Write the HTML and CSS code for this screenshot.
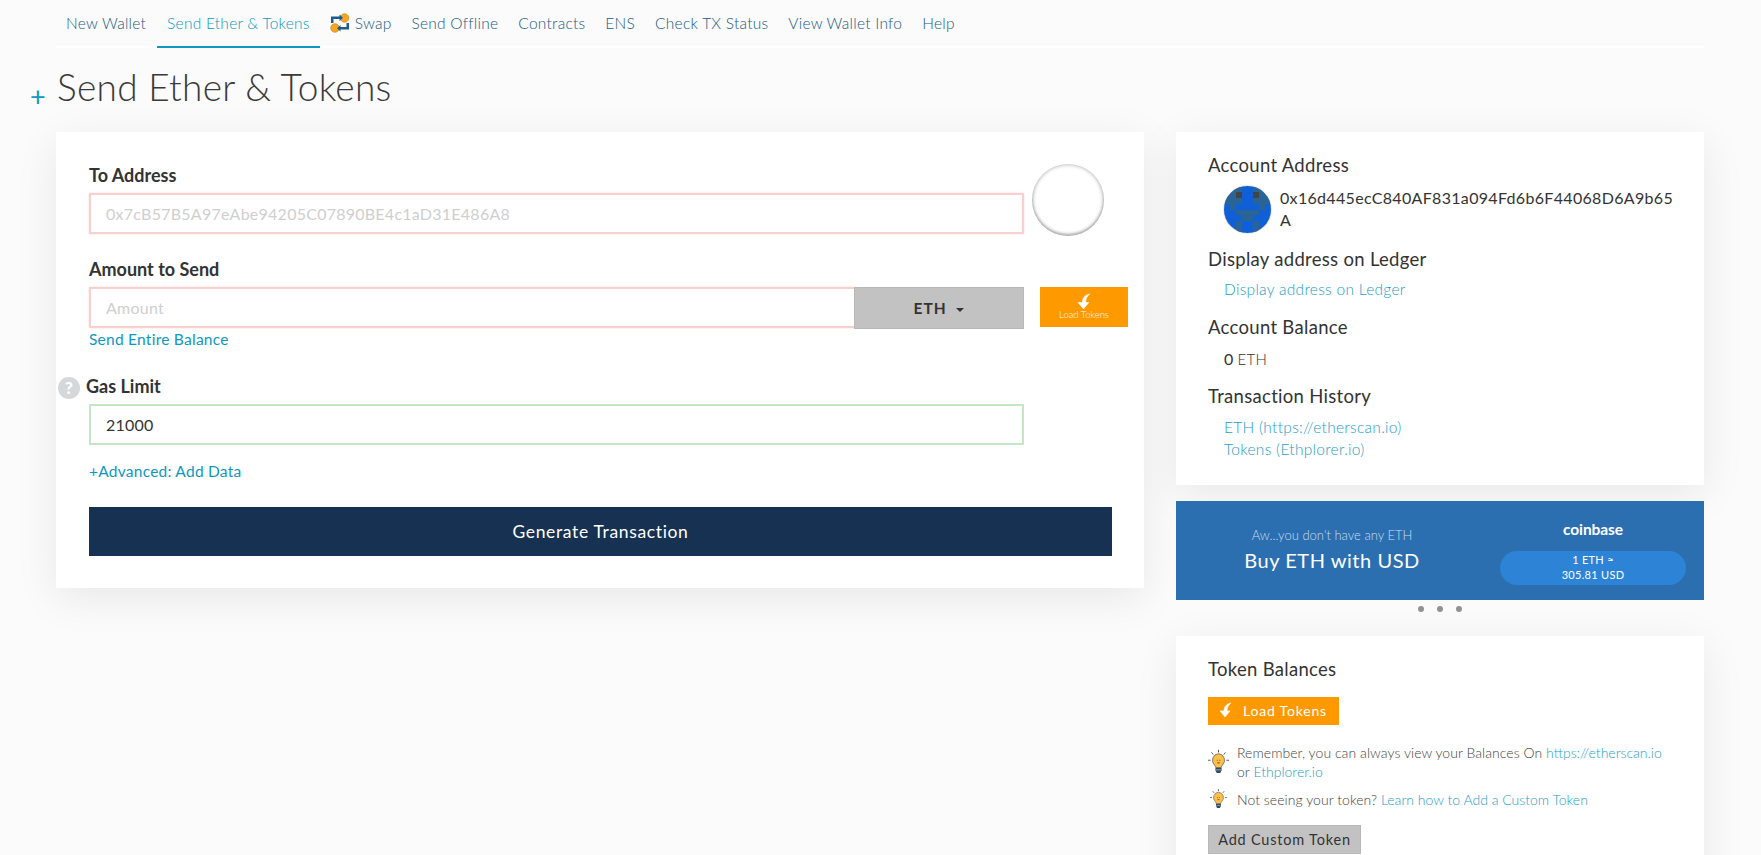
FILE: index.html
```html
<!DOCTYPE html>
<html lang="en">
<head>
<meta charset="utf-8">
<title>Send Ether &amp; Tokens</title>
<link rel="stylesheet" href="styles.css">
</head>
<body>
<svg class="defs" width="0" height="0" aria-hidden="true">
  <defs>
    <symbol id="arrow" viewBox="0 0 16 16">
      <path d="M13 1C8 2 6 5 6 9H2l5 6 5-6H9c0-3 1-6 4-8z" fill="currentColor" stroke="currentColor" stroke-width=".6" stroke-linejoin="round"/>
    </symbol>
    <symbol id="bulb" viewBox="0 0 24 28">
      <g stroke="#444" stroke-width="1" fill="none">
        <path d="M12 0v3M4 3l2 2.500M20 3l-2 2.500M0 12h3M21 12h3"/>
      </g>
      <path d="M12 4.500a7.500 7.500 0 0 0-4.500 13c1 1 1 2 1.500 3h6c.5-1 .5-2 1.500-3A7.500 7.500 0 0 0 12 4.500z" fill="#fbc04d" stroke="#555" stroke-width=".8"/>
      <path d="M10 12h1M13 12h1M10.500 15h3" stroke="#5a4520" stroke-width="1"/>
      <path d="M8.500 20.500h7v3l-1.500 3h-4l-1.500-3z" fill="#34495e"/>
      <path d="M9 23h6" stroke="#9fb6c8" stroke-width="1"/>
    </symbol>
  </defs>
</svg>

<nav class="nav">
  <a class="nav-item nav-first" href="#">New Wallet</a>
  <a class="nav-item is-active" href="#">Send Ether &amp; Tokens</a>
  <a class="nav-item" href="#">
    <svg class="swap-icon" viewBox="0 0 20 20" width="20" height="20" aria-hidden="true">
      <circle cx="14.500" cy="5" r="4.300" fill="#f6a623" stroke="#c97f10" stroke-width=".6"/>
      <circle cx="5" cy="15" r="4.300" fill="#f6a623" stroke="#c97f10" stroke-width=".6"/>
      <path d="M1 3.500h8.500V1.500l3.500 3.200-3.500 3.200V6H3.500v4H1z" fill="#1d5c8f"/>
      <path d="M19 16.500h-8.500v2l-3.500-3.200 3.500-3.200V14h6v-4H19z" fill="#1d5c8f"/>
    </svg>
    Swap</a>
  <a class="nav-item" href="#">Send Offline</a>
  <a class="nav-item" href="#">Contracts</a>
  <a class="nav-item" href="#">ENS</a>
  <a class="nav-item" href="#">Check TX Status</a>
  <a class="nav-item" href="#">View Wallet Info</a>
  <a class="nav-item" href="#">Help</a>
</nav>

<header class="title-row">
  <span class="plus">+</span>
  <h1 class="title">Send Ether &amp; Tokens</h1>
</header>

<main class="columns">
  <section class="card main-card">
    <div class="field-row address-row">
      <div class="field">
        <label class="field-label">To Address</label>
        <input class="text-input is-invalid" type="text" placeholder="0x7cB57B5A97eAbe94205C07890BE4c1aD31E486A8">
      </div>
      <div class="empty-identicon"></div>
    </div>

    <div class="field-row amount-row">
      <div class="field">
        <label class="field-label">Amount to Send</label>
        <div class="input-group">
          <input class="text-input is-invalid group-input" type="text" placeholder="Amount">
          <button class="eth-button" type="button">ETH <span class="caret"></span></button>
        </div>
        <a class="link send-all" href="#">Send Entire Balance</a>
      </div>
      <button class="load-small" type="button">
        <svg class="load-small-icon" aria-hidden="true"><use href="#arrow"/></svg>
        <span>Load Tokens</span>
      </button>
    </div>

    <div class="gas-label-row">
      <span class="help-badge">?</span>
      <label class="field-label gas-label">Gas Limit</label>
    </div>
    <input class="text-input is-valid gas-input" type="text" value="21000">
    <a class="link advanced" href="#">+Advanced: Add Data</a>

    <button class="generate" type="button">Generate Transaction</button>
  </section>

  <aside class="side">
    <section class="card side-card account-card">
      <h5 class="side-heading">Account Address</h5>
      <div class="address-line">
        <svg class="identicon" viewBox="0 0 8 8" shape-rendering="crispEdges" aria-hidden="true">
          <rect width="8" height="8" fill="#0f5fd6"/>
          <path d="M0 0h3v1H0zM5 0h3v1H5zM0 1h3v1H0zM5 1h3v1H5zM0 2h3v1H0zM5 2h3v1H5zM1 3h1v1H1zM6 3h1v1H6zM2 4h1v1H2zM5 4h1v1H5zM3 4h2v2H3zM2 6h1v2H2zM5 6h1v2H5z" fill="#2a6496"/>
          <path d="M2 1h1v1H2zM5 1h1v1H5z" fill="#444"/>
        </svg>
        <span class="address-text">0x16d445ecC840AF831a094Fd6b6F44068D6A9b65A</span>
      </div>
      <h5 class="side-heading">Display address on Ledger</h5>
      <p class="side-links"><a class="side-link" href="#">Display address on Ledger</a></p>
      <h5 class="side-heading">Account Balance</h5>
      <p class="balance"><strong class="balance-num">0</strong> <span class="balance-unit">ETH</span></p>
      <h5 class="side-heading">Transaction History</h5>
      <p class="side-links history">
        <a class="side-link" href="#">ETH (https://etherscan.io)</a>
        <a class="side-link" href="#">Tokens (Ethplorer.io)</a>
      </p>
    </section>

    <section class="banner">
      <div class="banner-left">
        <p class="banner-sub">Aw...you don't have any ETH</p>
        <p class="banner-main">Buy ETH with USD</p>
      </div>
      <div class="banner-right">
        <p class="coinbase">coinbase</p>
        <p class="rate">1 ETH ≈<br>305.81 USD</p>
      </div>
    </section>
    <div class="dots"><i class="dot"></i><i class="dot"></i><i class="dot"></i></div>

    <section class="card side-card token-card">
      <h5 class="side-heading token-heading">Token Balances</h5>
      <button class="load-big" type="button">
        <svg class="load-big-icon" aria-hidden="true"><use href="#arrow"/></svg>
        Load Tokens
      </button>
      <div class="tip tip-large">
        <svg class="bulb" aria-hidden="true"><use href="#bulb"/></svg>
        <p class="tip-text">Remember, you can always view your Balances On <a class="side-link" href="#">https://etherscan.io</a> or <a class="side-link" href="#">Ethplorer.io</a></p>
      </div>
      <div class="tip tip-small">
        <svg class="bulb small" aria-hidden="true"><use href="#bulb"/></svg>
        <p class="tip-text">Not seeing your token? <a class="side-link" href="#">Learn how to Add a Custom Token</a></p>
      </div>
      <button class="add-token" type="button">Add Custom Token</button>
    </section>
  </aside>
</main>
</body>
</html>
```

FILE: styles.css
```css
* { box-sizing: border-box; }
html, body { margin: 0; height: 855px; overflow: hidden; }
body {
  background: #fbfbfb;
  font-family: Lato, "Open Sans", sans-serif;
  color: #333;
}
.defs { position: absolute; }
p, h1, h5 { margin: 0; }
a { text-decoration: none; }

.nav {
  display: flex;
  margin: 0 56px;
  height: 48px;
  border-bottom: 2px solid #fff;
}
.nav-item {
  display: flex;
  align-items: center;
  gap: 5px;
  height: 48px;
  padding: 0 10px;
  font-size: 15.500px;
  font-weight: 300;
  letter-spacing: .25px;
  color: #1a5a85;
  white-space: nowrap;
  border-bottom: 2px solid transparent;
}
.nav-first { padding-right: 11px; }
.is-active { color: #0e97c0; border-bottom-color: #0e97c0; }
.swap-icon { display: block; }

.title-row { display: flex; align-items: flex-end; height: 84px; padding-left: 30px; }
.plus { width: 27px; font-size: 27px; font-weight: 400; color: #0e97c0; line-height: 1; padding-bottom: 23px; }
.title { font-size: 37px; font-weight: 300; line-height: 50px; padding-bottom: 20px; letter-spacing: .3px; color: #3a3a3a; }

.columns { display: flex; align-items: flex-start; gap: 32px; padding: 0 57px 0 56px; }
.card { background: #fff; box-shadow: 0 10px 40px rgba(0, 0, 0, .08); }
.main-card { width: 1088px; height: 456px; padding: 31px 33px; }
.side { width: 528px; }

.field-row { display: flex; align-items: flex-end; }
.field { width: 935px; flex: none; }
.field-label { display: block; font-size: 18px; font-weight: 700; line-height: 24px; color: #333; }
.text-input {
  display: block;
  width: 100%;
  height: 41px;
  padding: 0 15px;
  background: #fff;
  border: 2px solid;
  border-radius: 0;
  font: 400 16px Lato, sans-serif;
  letter-spacing: .25px;
  color: #333;
  outline: none;
}
.text-input::placeholder { color: #cfcfcf; }
.is-invalid { border-color: #f9d0d0; box-shadow: 0 0 2px rgba(248, 180, 180, .5); }
.is-valid { border-color: #c4e6c5; }

.address-row { align-items: flex-end; }
.address-row .field-label { margin-bottom: 6px; }
.empty-identicon {
  flex: none;
  width: 72px;
  height: 72px;
  margin: 0 0 -2px 8px;
  border-radius: 50%;
  background: #fff;
  box-shadow: inset 0 0 4px rgba(0, 0, 0, .35), inset 0 -2px 3px rgba(0, 0, 0, .2);
}

.amount-row { align-items: flex-start; margin-top: 23px; }
.amount-row .field-label { margin-bottom: 6px; }
.input-group { display: flex; height: 42px; }
.group-input { flex: 1; min-width: 0; width: auto; height: 41px; border-right: 0; }
.eth-button {
  width: 170px;
  height: 42px;
  border: 1px solid #b8b8b8;
  background: #c2c2c2;
  font: 700 15.500px Lato, sans-serif;
  letter-spacing: 1px;
  color: #333;
}
.caret {
  display: inline-block;
  margin-left: 5px;
  vertical-align: middle;
  border-top: 4px solid #333;
  border-left: 4px solid transparent;
  border-right: 4px solid transparent;
}
.load-small {
  flex: none;
  width: 88px;
  height: 40px;
  margin: 30px 0 0 16px;
  padding: 0;
  border: 0;
  background: #ff9900;
  color: #fff;
  font: 300 9.500px/12px Lato, sans-serif;
}
.load-small-icon { display: block; width: 17px; height: 17px; margin: 0 auto -1px; }
.link { color: #0e97c0; font-size: 15.500px; letter-spacing: .25px; }
.send-all { display: block; margin-top: 0; line-height: 20px; }

.gas-label-row { position: relative; margin-top: 25px; height: 30px; }
.gas-label { margin-left: -3px; line-height: 24px; }
.help-badge {
  position: absolute;
  left: -31px;
  top: 3px;
  width: 22px;
  height: 22px;
  border-radius: 50%;
  background: #d4d8da;
  color: #fff;
  font-size: 17px;
  font-weight: 900;
  line-height: 22px;
  text-align: center;
}
.gas-input { width: 935px; height: 41px; }
.advanced { display: block; margin-top: 16px; line-height: 20px; }
.generate {
  display: block;
  width: 1023px;
  height: 49px;
  margin-top: 26px;
  border: 0;
  background: #163151;
  color: #fff;
  font: 400 17.500px Lato, sans-serif;
  letter-spacing: .65px;
}

.side-card { padding: 21px 32px 0; }
.account-card { height: 353px; }
.side-heading { font-size: 18.500px; font-weight: 400; line-height: 24px; color: #333; letter-spacing: .3px; }
.address-line { display: flex; gap: 9px; margin: 8px 0 0 16px; height: 62px; }
.identicon { flex: none; width: 47px; height: 47px; margin-top: 1px; border-radius: 50%; box-shadow: 0 0 1px #333; }
.address-text {
  flex: none;
  width: 396px;
  padding-top: 2px;
  font-size: 16px;
  line-height: 22px;
  letter-spacing: .32px;
  word-break: break-all;
  color: #333;
}
.side-links { margin: 8px 0 14px 16px; font-size: 15.500px; line-height: 21.500px; }
.side-link { color: #1f9cc8; font-weight: 300; letter-spacing: .3px; }
.history { margin-top: 8px; line-height: 22px; }
.history .side-link { display: block; }
.balance { margin: 9px 0 14px 16px; line-height: 22px; }
.balance-num { font-weight: 400; font-size: 16px; }
.balance-unit { font-weight: 300; font-size: 15px; letter-spacing: .4px; }

.banner {
  display: flex;
  align-items: flex-start;
  height: 99px;
  margin-top: 16px;
  background: #2b6fb1;
  color: #fff;
}
.banner-left { width: 312px; padding-top: 24px; text-align: center; }
.banner-sub { font-size: 13px; font-weight: 300; line-height: 20px; color: #c8dcef; }
.banner-main { margin-top: 2px; font-size: 20px; line-height: 26px; letter-spacing: .55px; }
.banner-right { width: 186px; margin-left: 12px; text-align: center; padding-top: 18px; }
.coinbase { font-size: 15.500px; font-weight: 700; line-height: 20px; letter-spacing: -.1px; }
.rate {
  margin-top: 12px;
  height: 34px;
  padding-top: 1px;
  border-radius: 17px;
  background: #2d83d6;
  font-size: 11px;
  line-height: 15px;
  letter-spacing: .3px;
}
.dots { display: flex; justify-content: center; gap: 13px; height: 36px; padding-top: 6px; }
.dot { width: 6px; height: 6px; border-radius: 50%; background: #929292; }

.token-card { height: 300px; }
.token-heading { margin-bottom: 16px; }
.load-big {
  display: flex;
  align-items: center;
  gap: 9px;
  width: 131px;
  height: 28px;
  padding: 0 0 2px 10px;
  border: 0;
  background: #ff9900;
  color: #fff;
  font: 400 14px Lato, sans-serif;
  letter-spacing: .8px;
}
.load-big-icon { width: 16px; height: 16px; }
.tip { display: flex; align-items: center; gap: 8px; }
.tip-large { margin-top: 18px; }
.tip-small { margin-top: 8px; }
.tip-text { font-size: 14px; font-weight: 300; line-height: 19px; color: #444; letter-spacing: .05px; flex: 1; }
.tip-text .side-link { letter-spacing: 0; }
.bulb { flex: none; width: 21px; height: 26px; }
.bulb.small { width: 21px; height: 20px; }
.add-token {
  display: block;
  width: 153px;
  height: 29px;
  margin-top: 16px;
  border: 1px solid #b8b8b8;
  background: #c2c2c2;
  font: 400 14.500px Lato, sans-serif;
  letter-spacing: .8px;
  color: #333;
}
```
